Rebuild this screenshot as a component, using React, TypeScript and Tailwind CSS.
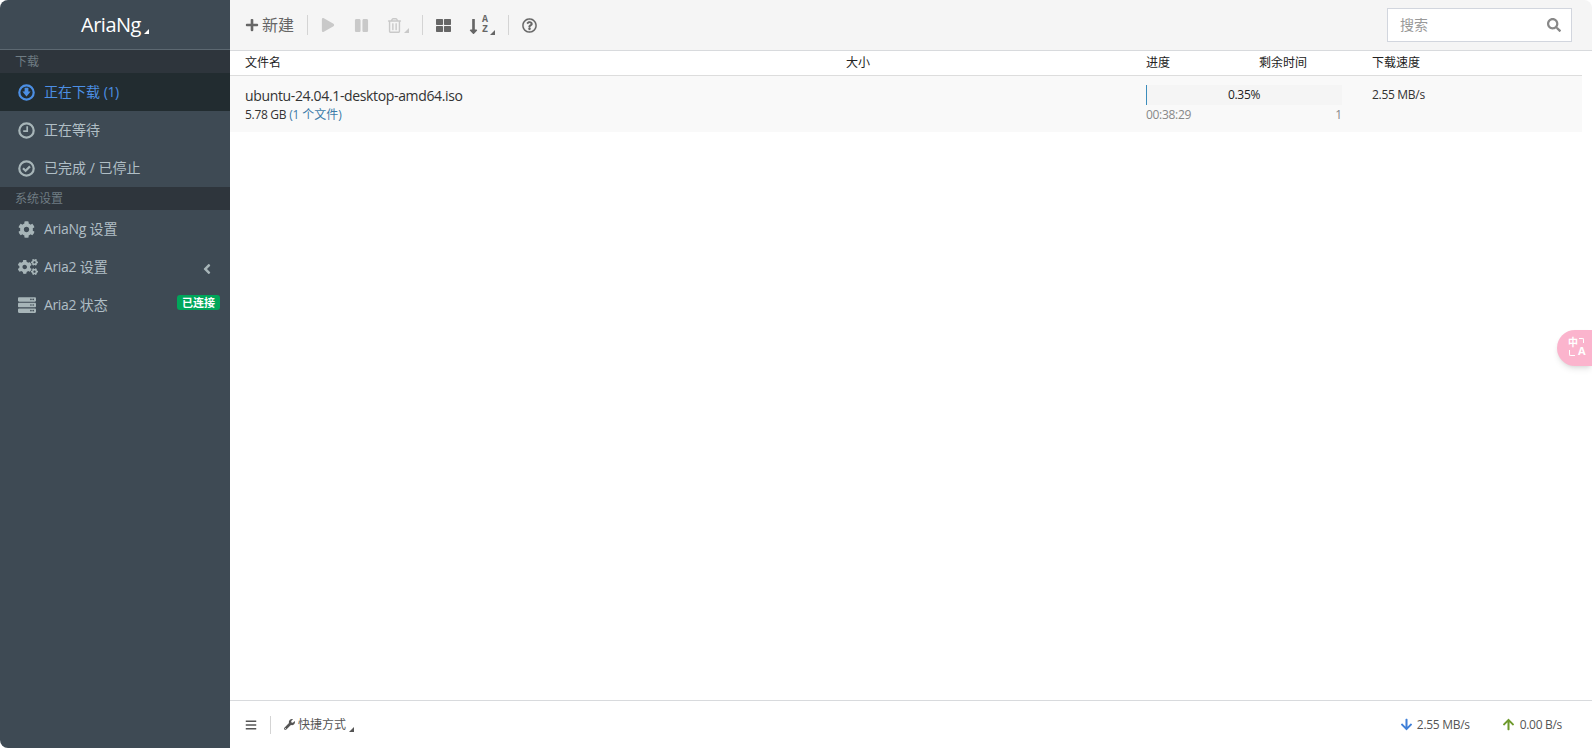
import React from 'react';
import {
  FaCog, FaCogs, FaServer, FaAngleLeft, FaPlus, FaPlay, FaPause, FaRegTrashAlt, FaThLarge,
  FaLongArrowAltDown, FaRegQuestionCircle, FaSearch, FaBars, FaWrench, FaArrowDown, FaArrowUp,
} from 'react-icons/fa';

const Caret = ({ className }: { className: string }) => (
  <svg viewBox="0 0 5 5" className={`w-[5px] h-[5px] ${className}`}>
    <polygon points="5,0 5,5 0,5" fill="currentColor" />
  </svg>
);

// font-awesome 4 style outlined circle icons
const CircleIcon = ({ children }: { children: React.ReactNode }) => (
  <svg viewBox="0 0 17 17" className="h-[17px] w-[17px]" fill="none" stroke="currentColor">
    <circle cx="8.5" cy="8.5" r="7.2" strokeWidth="2.2" />
    {children}
  </svg>
);

const DownloadIcon = () => (
  <CircleIcon>
    <path d="M6.6 3.8h3.8v3.6h2.2L8.5 12.6 4.4 7.4h2.2z" fill="currentColor" stroke="none" />
  </CircleIcon>
);

const ClockIcon = () => (
  <CircleIcon>
    <path d="M9.2 4.2v5H5.2" strokeWidth="1.7" />
  </CircleIcon>
);

const CheckIcon = () => (
  <CircleIcon>
    <path d="M5 8.2l2.6 2.6L12 6.4" strokeWidth="2.2" />
  </CircleIcon>
);

const SectionHeader = ({ label }: { label: string }) => (
  <div className="h-[23px] bg-[#2e353c] pl-[15px] text-xs leading-[23px] text-[#6f7c83]">{label}</div>
);

interface NavItemProps {
  icon: React.ReactNode;
  label: React.ReactNode;
  active?: boolean;
  children?: React.ReactNode;
}

const NavItem = ({ icon, label, active, children }: NavItemProps) => (
  <div className={`flex h-[38px] items-center pl-[18px] text-sm ${active ? 'bg-[#222c30] text-[#4c8fe4]' : 'text-[#b0bec5]'}`}>
    <span className={`flex w-[26px] shrink-0 items-center text-[17px] ${active ? '' : 'text-[#a7b5b8]'}`}>{icon}</span>
    <span>{label}</span>
    {children}
  </div>
);

const Latin = ({ children }: { children: React.ReactNode }) => (
  <span className="tracking-[-0.025em]">{children}</span>
);

const Divider = () => <div className="mx-[13px] h-[20px] w-px bg-[#d4d4d4]" />;

export default function App() {
  return (
    <div className="h-screen bg-white font-['Open_Sans','Noto_Sans_CJK_SC',sans-serif] text-[#333]">
      <div className="flex h-full overflow-hidden rounded-[8px]">
        <aside className="flex w-[230px] shrink-0 flex-col bg-[#3e4a54]">
          <div className="flex h-[50px] items-center justify-center border-b border-[#5c6871] text-[20px] text-white">
            <Latin>AriaNg</Latin>
            <Caret className="ml-[3px] mt-[13px] text-white" />
          </div>
          <SectionHeader label="下载" />
          <NavItem active label={<>正在下载 <Latin>(1)</Latin></>} icon={<DownloadIcon />} />
          <NavItem label="正在等待" icon={<ClockIcon />} />
          <NavItem label="已完成 / 已停止" icon={<CheckIcon />} />
          <SectionHeader label="系统设置" />
          <NavItem label={<><Latin>AriaNg</Latin> 设置</>} icon={<FaCog />} />
          <NavItem label={<><Latin>Aria2</Latin> 设置</>} icon={<FaCogs className="text-[20px]" />}>
            <FaAngleLeft className="ml-auto mr-[15px] mt-[3px] text-[16px] text-[#a7b5b8]" />
          </NavItem>
          <NavItem label={<><Latin>Aria2</Latin> 状态</>} icon={<FaServer className="text-[18px]" />}>
            <span className="mb-[5px] ml-auto mr-[10px] rounded-[3px] bg-[#00a65a] px-[5px] text-[11px] font-bold leading-[15px] text-white">已连接</span>
          </NavItem>
        </aside>

        <main className="flex min-w-0 flex-1 flex-col">
          <div className="flex h-[51px] shrink-0 items-center border-b border-[#d8dadd] bg-[#f5f5f5] pl-[15px] pr-[20px] text-[#666]">
            <FaPlus className="text-[14px]" />
            <span className="ml-[3px] text-[16px]">新建</span>
            <Divider />
            <div className="flex items-center gap-[18px] text-[#c9c9c9]">
              <FaPlay className="text-[14px]" />
              <FaPause className="ml-[1px] text-[15px]" />
              <span className="flex items-end">
                <FaRegTrashAlt className="text-[15px]" />
                <Caret className="ml-[2px]" />
              </span>
            </div>
            <Divider />
            <FaThLarge className="text-[15px]" />
            <span className="ml-[14px] flex items-end">
              <FaLongArrowAltDown className="text-[17px]" />
              <span className="flex flex-col text-center font-['Liberation_Mono',monospace] text-[10px] font-bold leading-[10px]">
                <span>A</span>
                <span>Z</span>
              </span>
              <Caret className="ml-[2px]" />
            </span>
            <Divider />
            <FaRegQuestionCircle className="text-[15px]" stroke="currentColor" strokeWidth={6} />
            <div className="ml-auto flex h-[34px] w-[185px] items-center justify-between border border-[#d2d6de] bg-white pl-[12px] pr-[10px] text-sm text-[#999]">
              <span>搜索</span>
              <FaSearch className="text-[14px] text-[#888]" />
            </div>
          </div>

          <div className="min-h-0 flex-1 pr-[10px]">
            <div className="grid h-[25px] grid-cols-[601px_300px_113px_113px_1fr] items-center border-b border-[#dddddd] pl-[15px] text-xs text-[#222]">
              <span>文件名</span>
              <span>大小</span>
              <span>进度</span>
              <span>剩余时间</span>
              <span>下载速度</span>
            </div>
            <div className="grid h-[56px] grid-cols-[901px_226px_1fr] bg-[#f9f9f9] pl-[15px] text-xs">
              <div className="pt-[10px]">
                <div className="text-sm leading-[20px]"><Latin>ubuntu-24.04.1-desktop-amd64.iso</Latin></div>
                <div className="leading-[18px]"><Latin>5.78 GB</Latin> <span className="text-[#3c7ba8]"><Latin>(1</Latin> 个文件<Latin>)</Latin></span></div>
              </div>
              <div className="w-[196px] pt-[9px]">
                <div className="relative h-[20px] bg-[#f5f5f5] text-center leading-[20px] text-[#222]">
                  <div className="absolute inset-y-0 left-0 w-px bg-[#3c8dbc]" />
                  <Latin>0.35%</Latin>
                </div>
                <div className="mt-[1px] flex justify-between leading-[18px] text-[#888]">
                  <Latin>00:38:29</Latin>
                  <span>1</span>
                </div>
              </div>
              <div className="pt-[9px] leading-[20px]"><Latin>2.55 MB/s</Latin></div>
            </div>
          </div>

          <div className="flex h-[48px] shrink-0 items-center border-t border-[#d8dadd] bg-white pl-[15px] pr-[30px] text-xs text-[#555]">
            <FaBars className="text-[12px]" />
            <div className="mx-[13px] h-[18px] w-px bg-[#d4d4d4]" />
            <FaWrench className="text-[11px]" />
            <span className="ml-[3px]">快捷方式</span>
            <Caret className="ml-[3px] mt-[10px]" />
            <FaArrowDown className="ml-auto text-[13px] text-[#3f7fd8]" />
            <span className="ml-[4px]"><Latin>2.55 MB/s</Latin></span>
            <FaArrowUp className="ml-[32px] text-[13px] text-[#6e9a2c]" />
            <span className="ml-[5px]"><Latin>0.00 B/s</Latin></span>
          </div>
        </main>
      </div>

      {/* floating translate widget */}
      <div className="absolute left-[1557px] top-[330px] h-[36px] w-[35px] rounded-l-[18px] bg-[#fbb4cd] text-white shadow-md">
        <span className="absolute left-[11px] top-[6px] text-[10px] font-bold leading-[12px]">中</span>
        <span className="absolute left-[21px] top-[14px] text-[11px] font-bold leading-[14px]">A</span>
        <span className="absolute left-[22px] top-[8px] h-[5px] w-[5px] rounded-tr-[2px] border-r border-t border-white" />
        <span className="absolute left-[12px] top-[20px] h-[6px] w-[6px] rounded-bl-[2px] border-b border-l border-white" />
      </div>
    </div>
  );
}
